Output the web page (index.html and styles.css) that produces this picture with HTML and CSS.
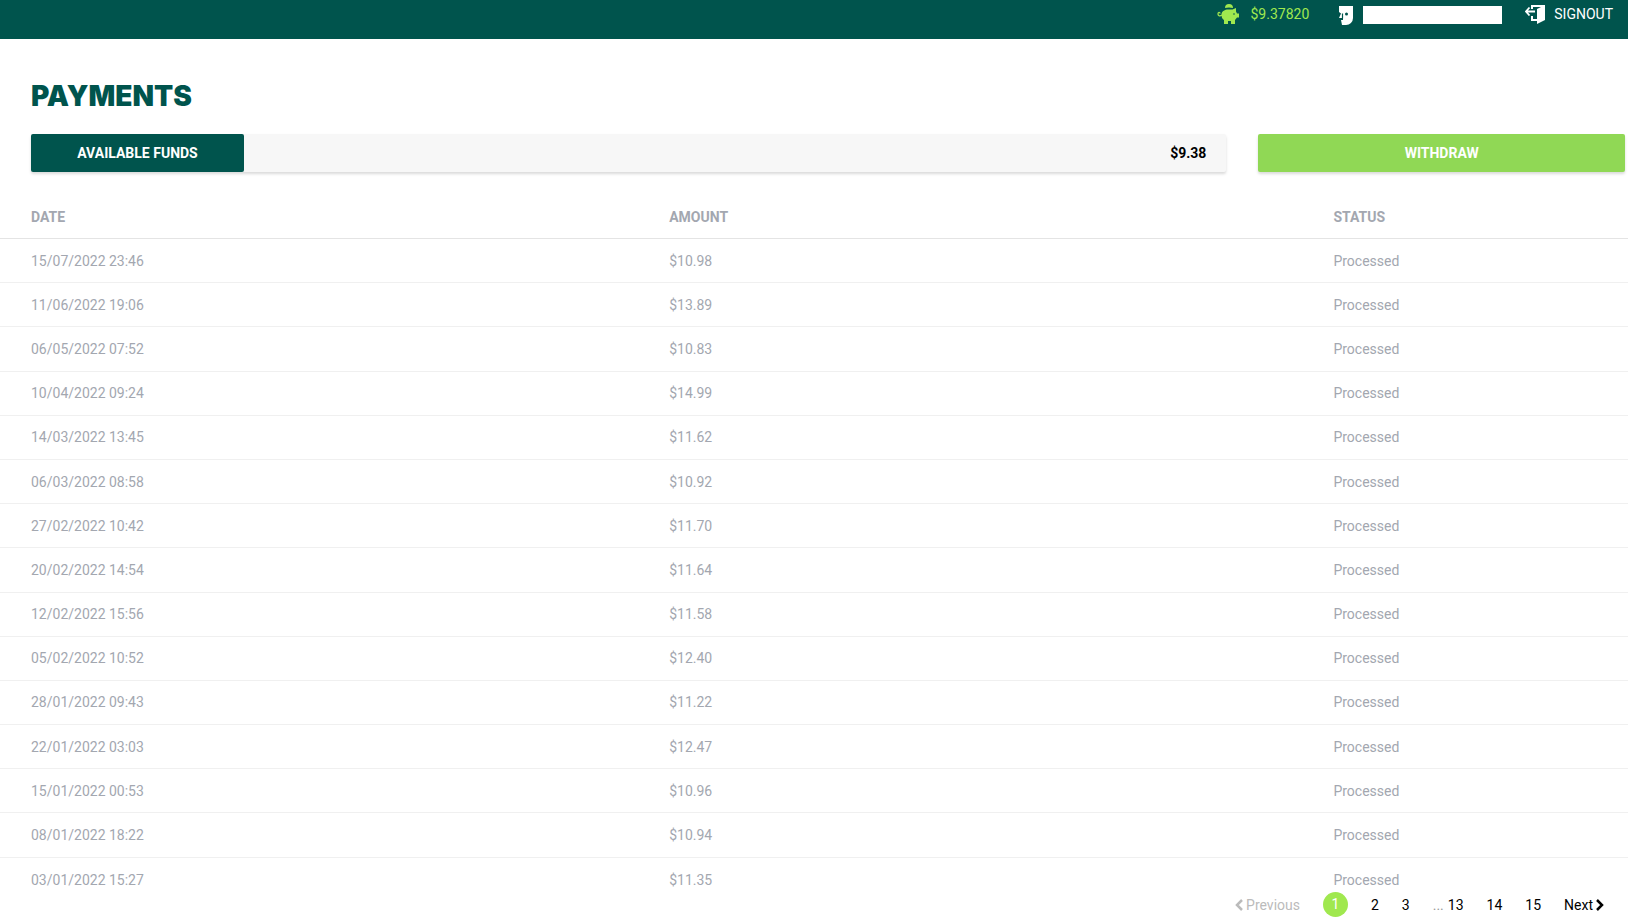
FILE: index.html
```html
<!DOCTYPE html>
<html lang="en">
<head>
    <meta charset="UTF-8">
    <meta name="viewport" content="width=device-width, initial-scale=1.0">
    <title>Payments</title>
    <link rel="stylesheet" href="styles.css">
</head>
<body>
    <header class="topbar">
        <a href="#" class="topbar-item balance">
            <svg width="22" height="20" viewBox="0 0 22 20" fill="currentColor" aria-hidden="true">
                <path d="M8 4a4 4 0 0 1 8 0q-4-1-8 0z"/>
                <path d="M4.500 10C5 7 8 5.500 11 5.500h4.500L19 4v3.500l1 2h2v4h-2L18 16v4h-4v-3h-3v3H7v-4c-2-1-2.500-3-2.500-6z"/>
                <path d="M5 11C3 12.500 1 12 1 10s2-2 2-.5" fill="none" stroke="currentColor" stroke-width="1.3"/>
                <circle cx="17" cy="10" r=".8" fill="#00544d"/>
            </svg>
            <span>$9.37820</span>
        </a>
        <a href="#" class="topbar-item account" aria-label="Account">
            <svg width="14" height="19" viewBox="0 0 14 19" fill="currentColor" aria-hidden="true">
                <path d="M0 0h14v12a7 7 0 0 1-7 7H3l-1-5h2v-2H0l2-4.500L0 6z"/>
                <path d="M3.500 7.500v5" stroke="#00544d" stroke-width="1.2"/>
                <circle cx="7.500" cy="8" r="1.500" fill="#00544d"/>
            </svg>
            <span class="username"></span>
        </a>
        <a href="#" class="topbar-item signout">
            <svg width="20" height="19" viewBox="0 0 20 19" fill="currentColor" aria-hidden="true">
                <path d="M6 0h14v15l-8 4v-3H6v-5h2v3h4V4l4-2H8v2H6z"/>
                <path d="M4.500 2.500L1 6.500l3.500 4M1 6.500h9" fill="none" stroke="currentColor" stroke-width="1.8"/>
            </svg>
            <span>SIGNOUT</span>
        </a>
    </header>

    <main>
        <h1>PAYMENTS</h1>
        <div class="funds">
            <div class="funds-bar">
                <span class="funds-label">AVAILABLE FUNDS</span>
                <span class="funds-value">$9.38</span>
            </div>
            <button type="button" class="withdraw">WITHDRAW</button>
        </div>

        <table class="payments">
            <thead>
                <tr>
                    <th class="col-date">DATE</th>
                    <th class="col-amount">AMOUNT</th>
                    <th>STATUS</th>
                </tr>
            </thead>
            <tbody>
                <tr><td>15/07/2022 23:46</td><td>$10.98</td><td>Processed</td></tr>
                <tr><td>11/06/2022 19:06</td><td>$13.89</td><td>Processed</td></tr>
                <tr><td>06/05/2022 07:52</td><td>$10.83</td><td>Processed</td></tr>
                <tr><td>10/04/2022 09:24</td><td>$14.99</td><td>Processed</td></tr>
                <tr><td>14/03/2022 13:45</td><td>$11.62</td><td>Processed</td></tr>
                <tr><td>06/03/2022 08:58</td><td>$10.92</td><td>Processed</td></tr>
                <tr><td>27/02/2022 10:42</td><td>$11.70</td><td>Processed</td></tr>
                <tr><td>20/02/2022 14:54</td><td>$11.64</td><td>Processed</td></tr>
                <tr><td>12/02/2022 15:56</td><td>$11.58</td><td>Processed</td></tr>
                <tr><td>05/02/2022 10:52</td><td>$12.40</td><td>Processed</td></tr>
                <tr><td>28/01/2022 09:43</td><td>$11.22</td><td>Processed</td></tr>
                <tr><td>22/01/2022 03:03</td><td>$12.47</td><td>Processed</td></tr>
                <tr><td>15/01/2022 00:53</td><td>$10.96</td><td>Processed</td></tr>
                <tr><td>08/01/2022 18:22</td><td>$10.94</td><td>Processed</td></tr>
                <tr><td>03/01/2022 15:27</td><td>$11.35</td><td>Processed</td></tr>
            </tbody>
        </table>

        <nav class="pagination" aria-label="Pages">
            <a href="#" class="step disabled">
                <svg width="8" height="12" viewBox="0 0 8 12" aria-hidden="true"><path d="M7 1L2 6l5 5"/></svg>
                Previous
            </a>
            <a href="#" class="current">1</a>
            <a href="#">2</a>
            <a href="#">3</a>
            <span class="page-gap"><span class="dots">...</span><a href="#">13</a></span>
            <a href="#">14</a>
            <a href="#">15</a>
            <a href="#" class="step">
                Next
                <svg width="8" height="12" viewBox="0 0 8 12" aria-hidden="true"><path d="M1 1l5 5-5 5"/></svg>
            </a>
        </nav>
    </main>
</body>
</html>
```
FILE: styles.css
```css
* {
    box-sizing: border-box;
}
body {
    margin: 0;
    min-height: 100vh;
    display: flex;
    flex-direction: column;
    background-color: #fff;
    font-family: Roboto, sans-serif;
    font-size: 14px;
    line-height: 18px;
}
a {
    color: inherit;
    text-decoration: none;
}

/* top bar */
.topbar {
    display: flex;
    justify-content: flex-end;
    align-items: flex-start;
    height: 39px;
    padding: 4px 15px 0 0;
    background-color: #00544d;
    color: #fff;
}
.topbar-item {
    display: flex;
    align-items: center;
    gap: 10px;
    height: 20px;
}
.balance {
    gap: 12px;
    color: #a0e84f;
}
.account {
    height: 22px;
    margin: 0 23px 0 30px;
}
.username {
    width: 139px;
    height: 18px;
    background-color: #fff;
}
.signout {
    gap: 9px;
}

/* content */
main {
    flex: 1;
    display: flex;
    flex-direction: column;
}
h1 {
    margin: 39px 31px 20px;
    color: #00544d;
    font-family: Inter, sans-serif;
    font-size: 28px;
    font-weight: 900;
    line-height: 36px;
}
.funds {
    display: grid;
    grid-template-columns: minmax(0, 1fr) 23%;
    gap: 32px;
    margin: 0 3px 0 31px;
}
.funds-bar,
.withdraw {
    height: 38px;
    border-radius: 2px;
    box-shadow: 0 2px 3px rgba(0, 0, 0, 0.15);
    font-weight: bold;
}
.funds-bar {
    display: flex;
    justify-content: space-between;
    align-items: center;
    background-color: #f7f7f7;
}
.funds-label {
    width: 213px;
    border-radius: 2px;
    background-color: #00544d;
    color: #fff;
    line-height: 38px;
    text-align: center;
}
.funds-value {
    padding-right: 20px;
}
.withdraw {
    border: none;
    background-color: #90d855;
    color: #fff;
    font-family: inherit;
    font-size: 14px;
    cursor: pointer;
}

/* table */
.payments {
    flex: 1;
    width: 100%;
    margin-top: 23px;
    border-collapse: separate;
    border-spacing: 0;
    table-layout: fixed;
    color: #a3a7b0;
}
.payments th,
.payments td {
    height: 44px;
    padding: 0 31px;
    border-bottom: 1px solid #f0f0f0;
    text-align: left;
}
.payments th {
    border-color: #e4e4e4;
}
.payments tr:last-child td {
    border-bottom: none;
}
.payments thead tr:last-child th {
    border-bottom: 1px solid #e4e4e4;
}
.col-date {
    width: 39.2%;
}
.col-amount {
    width: 40.8%;
}

/* pagination */
.pagination {
    display: flex;
    justify-content: flex-end;
    align-items: center;
    gap: 23px;
    margin: -10px 24px 6px;
    color: #000;
}
.current {
    width: 25px;
    height: 25px;
    border-radius: 50%;
    background-color: #a0e84f;
    color: #fff;
    line-height: 25px;
    text-align: center;
}
.page-gap {
    display: flex;
    gap: 4px;
}
.dots {
    color: #999;
}
.step {
    display: flex;
    align-items: center;
    gap: 3px;
}
.step svg {
    fill: none;
    stroke: currentColor;
    stroke-width: 2.5;
}
.disabled {
    color: #bbb;
}
```
